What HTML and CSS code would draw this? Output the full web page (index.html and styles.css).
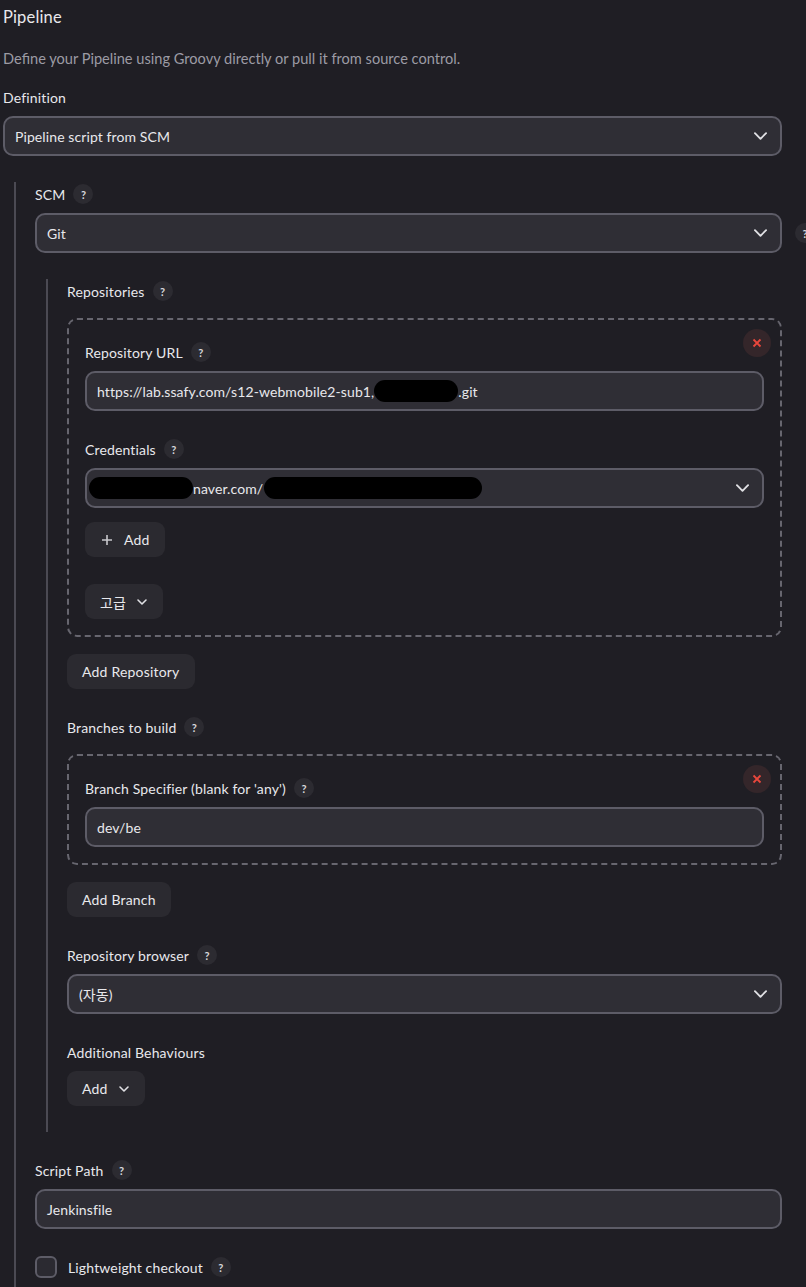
FILE: index.html
```html
<!DOCTYPE html>
<html lang="ko">
<head>
    <meta charset="UTF-8">
    <meta name="viewport" content="width=device-width, initial-scale=1.0">
    <title>Pipeline</title>
    <link rel="stylesheet" href="styles.css">
</head>
<body>
    <div class="page">
        <h2 class="title">Pipeline</h2>
        <p class="desc">Define your Pipeline using Groovy directly or pull it from source control.</p>

        <div class="field">
            <div class="label">Definition</div>
            <div class="select">
                <span>Pipeline script from SCM</span>
                <svg class="chevron" viewBox="0 0 14 8"><path d="M1 1l6 6 6-6"/></svg>
            </div>
        </div>

        <div class="nested nested-outer">
            <div class="field">
                <div class="label">SCM <span class="help">?</span></div>
                <div class="control-row">
                    <div class="select">
                        <span>Git</span>
                        <svg class="chevron" viewBox="0 0 14 8"><path d="M1 1l6 6 6-6"/></svg>
                    </div>
                    <span class="help help-side">?</span>
                </div>
            </div>

            <div class="nested nested-inner">
                <div class="field">
                    <div class="label">Repositories <span class="help">?</span></div>
                    <div class="repeated">
                        <span class="close"><svg viewBox="0 0 10 10"><path d="M1.5 1.5l7 7M8.5 1.5l-7 7"/></svg></span>
                        <div class="field">
                            <div class="label">Repository URL <span class="help">?</span></div>
                            <div class="input">https://lab.ssafy.com/s12-webmobile2-sub1,<span class="redact" style="width: 84px;"></span>.git</div>
                        </div>
                        <div class="field field-last">
                            <div class="label">Credentials <span class="help">?</span></div>
                            <div class="select">
                                <span class="cred"><span class="redact" style="width: 104px; margin-left: -8px;"></span>naver.com/<span class="redact" style="width: 218px; margin-left: 1px;"></span></span>
                                <svg class="chevron" viewBox="0 0 14 8"><path d="M1 1l6 6 6-6"/></svg>
                            </div>
                        </div>
                        <div class="btn-stack">
                            <button class="btn btn-add">
                                <svg class="plus" viewBox="0 0 16 16"><path d="M8 3v10M3 8h10"/></svg>
                                Add
                            </button>
                            <button class="btn btn-menu">
                                고급
                                <svg class="small-chevron" viewBox="0 0 12 8"><path d="M2 2l4 4 4-4"/></svg>
                            </button>
                        </div>
                    </div>
                    <button class="btn btn-after">Add Repository</button>
                </div>

                <div class="field">
                    <div class="label">Branches to build <span class="help">?</span></div>
                    <div class="repeated">
                        <span class="close"><svg viewBox="0 0 10 10"><path d="M1.5 1.5l7 7M8.5 1.5l-7 7"/></svg></span>
                        <div class="field field-last">
                            <div class="label">Branch Specifier (blank for 'any') <span class="help">?</span></div>
                            <div class="input">dev/be</div>
                        </div>
                    </div>
                    <button class="btn btn-after">Add Branch</button>
                </div>

                <div class="field">
                    <div class="label">Repository browser <span class="help">?</span></div>
                    <div class="select">
                        <span>(자동)</span>
                        <svg class="chevron" viewBox="0 0 14 8"><path d="M1 1l6 6 6-6"/></svg>
                    </div>
                </div>

                <div class="field">
                    <div class="label">Additional Behaviours</div>
                    <button class="btn btn-menu">
                        Add
                        <svg class="small-chevron" viewBox="0 0 12 8"><path d="M2 2l4 4 4-4"/></svg>
                    </button>
                </div>
            </div>

            <div class="field">
                <div class="label">Script Path <span class="help">?</span></div>
                <div class="input">Jenkinsfile</div>
            </div>

            <div class="checkbox-row">
                <span class="checkbox"></span>
                <span class="checkbox-label">Lightweight checkout</span>
                <span class="help">?</span>
            </div>
        </div>
    </div>
</body>
</html>
```

FILE: styles.css
```css
html, body {
    margin: 0;
    background-color: #1f1e24;
    overflow: hidden;
}
body {
    font-family: Lato, "Noto Sans", "Noto Sans CJK KR", sans-serif;
    font-size: 14px;
    letter-spacing: 0.15px;
    color: #e8e8ec;
    height: 1287px;
}
.page {
    width: 779px;
    padding: 5px 0 0 3px;
}
.title {
    margin: 0;
    font-size: 16.5px;
    font-weight: 400;
    line-height: 24px;
}
.desc {
    margin: 20px 0 16px;
    font-size: 14.6px;
    line-height: 20px;
    letter-spacing: 0;
    color: #9c9ba4;
}
.field {
    margin-bottom: 26px;
}
.field-last {
    margin-bottom: 0;
}
.label {
    display: flex;
    align-items: center;
    gap: 8px;
    height: 24px;
    margin-bottom: 7px;
}
.help {
    display: inline-flex;
    align-items: center;
    justify-content: center;
    width: 20px;
    height: 20px;
    border-radius: 50%;
    background-color: #2c2b31;
    color: #d8d8dc;
    font-size: 11px;
    font-weight: bold;
    letter-spacing: 0;
    flex-shrink: 0;
}
.control-row {
    display: flex;
    align-items: center;
    gap: 13px;
    margin-right: -33px;
}
.control-row .select {
    flex: 1;
}
.select, .input {
    box-sizing: border-box;
    display: flex;
    align-items: center;
    height: 40px;
    padding: 0 12px 0 10px;
    background-color: #2f2e35;
    border: 2px solid #5d5c67;
    border-radius: 10px;
    color: #e8e8ec;
    letter-spacing: 0.1px;
    white-space: nowrap;
    overflow: hidden;
}
.select > span:first-child {
    flex: 1;
}
.chevron {
    width: 13px;
    height: 8px;
    margin-right: 1px;
    fill: none;
    stroke: #e0e0e4;
    stroke-width: 2;
    stroke-linecap: round;
    stroke-linejoin: round;
}
.redact {
    display: inline-block;
    height: 22px;
    vertical-align: middle;
    background-color: #000;
    border-radius: 11px;
}
.cred {
    display: flex;
    align-items: center;
}
.nested {
    display: flow-root;
    margin-left: 11px;
    padding-left: 19px;
    border-left: 2px solid #4b4a53;
}
.nested-outer {
    padding-bottom: 40px;
}
.nested-inner {
    margin-bottom: 26px;
}
.repeated {
    position: relative;
    margin-top: 15px;
    padding: 20px 16px 16px 16px;
    border: 2px dashed #67666f;
    border-radius: 10px;
}
.close {
    position: absolute;
    top: 9px;
    right: 9px;
    display: flex;
    align-items: center;
    justify-content: center;
    width: 28px;
    height: 28px;
    border-radius: 50%;
    background-color: #34262a;
}
.close svg {
    width: 10px;
    height: 10px;
    fill: none;
    stroke: #e8473c;
    stroke-width: 1.8;
}
.btn-stack {
    display: flex;
    flex-direction: column;
    align-items: flex-start;
    gap: 27px;
    margin-top: 14px;
}
.btn {
    display: inline-flex;
    align-items: center;
    gap: 7px;
    height: 35px;
    padding: 0 15px;
    border: none;
    border-radius: 9px;
    background-color: #2b2a30;
    color: #e8e8ec;
    font-family: inherit;
    font-size: 14px;
    letter-spacing: 0.2px;
    cursor: pointer;
}
.btn-add {
    gap: 9px;
    padding: 0 15px 0 14px;
}
.btn-after {
    margin-top: 17px;
}
.btn-menu {
    gap: 10px;
    padding: 0 15px;
}
.plus {
    width: 16px;
    height: 16px;
    fill: none;
    stroke: #c8c8cc;
    stroke-width: 1.6;
}
.small-chevron {
    width: 12px;
    height: 8px;
    fill: none;
    stroke: #e0e0e4;
    stroke-width: 1.6;
    stroke-linecap: round;
    stroke-linejoin: round;
}
.checkbox-row {
    display: flex;
    align-items: center;
    height: 24px;
}
.checkbox {
    box-sizing: border-box;
    width: 22px;
    height: 22px;
    border: 2px solid #5d5c67;
    border-radius: 6px;
    background-color: #2b2a31;
    margin-right: 11px;
}
.checkbox-label {
    margin-right: 8px;
}
```
